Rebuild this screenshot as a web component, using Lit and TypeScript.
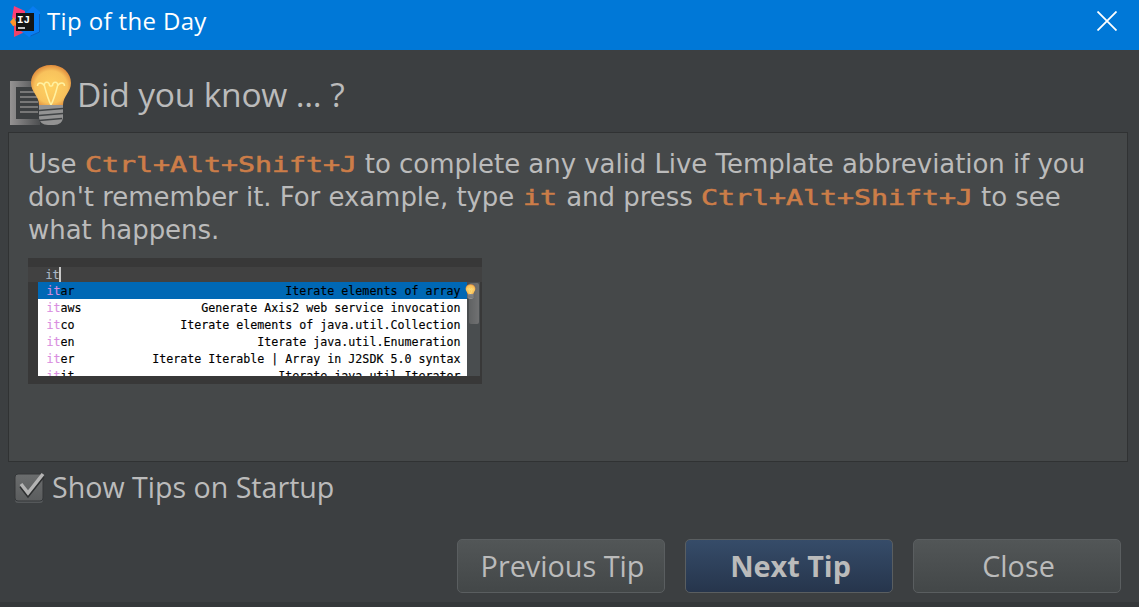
import { LitElement, html, css, svg } from "lit";
import { customElement, state } from "lit/decorators.js";

const bulb = svg`
  <path d="M20 1C8 1 0 9 0 19c0 9 8 13 8 22h24c0-9 8-13 8-22C40 9 32 1 20 1Z" fill="url(#glow)"/>
  <path d="M6.500 22c0-4 5-4 7 0 1 4 3 12 6.500 19 3.500-7 5.500-15 6.500-19 2-4 7-4 7 0M13.500 22c-1-5 5-5 5 0M26.500 22c1-5-5-5-5 0M18.500 22h3" fill="none" stroke="#fff1a0" stroke-width="1.500"/>
  <path d="M8 41h24v13q-1 7-9 7h-6q-8 0-9-7Z" fill="#939393"/>
  <path d="M8 46.500l24-2M8 51.500l24-2M8 56.500l23-2" stroke="#414446" stroke-width="1.300"/>`;

const glow = svg`<radialGradient id="glow" cx=".5" cy=".55" r=".58">
  <stop offset="0" stop-color="#ffd262"/><stop offset=".7" stop-color="#f8c25c"/>
  <stop offset="1" stop-color="#da8137"/></radialGradient>`;

@customElement("completion-preview")
class CompletionPreview extends LitElement {
  static styles = css`
    :host { display: block; box-sizing: border-box; width: 454px; height: 126px; padding: 9px 0 0;
      background: #383838; font: 11.650px/17px "DejaVu Sans Mono", monospace; color: #000; }
    .input { height: 15px; background: #414141; padding-left: 17.500px; color: #a9b7c6; display: flex; white-space: pre; -webkit-text-stroke: .2px; }
    .caret { width: 2px; height: 15px; background: #c8c8c8; margin-left: -.6px; }
    .body { display: flex; margin-left: 10px; height: 94px; width: 442px; overflow: hidden; }
    .list { width: 429px; background: #fff; }
    .row { display: flex; justify-content: space-between; height: 17px; line-height: 19px; padding: 0 6.500px 0 8.500px; -webkit-text-stroke: .15px; }
    .selected { background: #0068b5; }
    .prefix { color: #d98ee0; }
    .track { width: 13px; background: #494d4f; position: relative; }
    .thumb { width: 10px; height: 41px; margin: 1px 0 0 2px; border-radius: 2px; background: linear-gradient(90deg,#606263,#707172); }
    .bulb { position: absolute; left: -2px; top: 2px; }
  `;
  private rows = [
    ["ar", "Iterate elements of array"],
    ["aws", "Generate Axis2 web service invocation"],
    ["co", "Iterate elements of java.util.Collection"],
    ["en", "Iterate java.util.Enumeration"],
    ["er", "Iterate Iterable | Array in J2SDK 5.0 syntax"],
    ["it", "Iterate java.util.Iterator"],
  ];
  render() {
    return html`<div class="input"><span>it</span><i class="caret"></i></div>
      <div class="body"><div class="list">
        ${this.rows.map(([end, info], i) => html`<div class="row ${i ? "" : "selected"}">
          <span><span class="prefix">it</span>${end}</span><span>${info}</span></div>`)}
      </div><div class="track"><div class="thumb"></div>
        <svg class="bulb" width="11" height="15" viewBox="0 0 40 61"><defs>${glow}</defs>${bulb}</svg>
      </div></div>`;
  }
}

@customElement("app-root")
class AppRoot extends LitElement {
  static styles = css`
    :host { display: flex; flex-direction: column; box-sizing: border-box; width: 1139px; height: 607px;
      background: #3c3f41; color: #bbb; font-family: "Open Sans", sans-serif; overflow: hidden; }
    .titlebar { height: 50px; flex: none; box-sizing: border-box; background: #0078d7; color: #fff; display: flex; align-items: center;
      padding: 0 22px 8px 10px; font-size: 24px; }
    .title { margin: 0 0 1px 7px; flex: 1; letter-spacing: .36px; }
    .heading { height: 82px; flex: none; display: flex; padding: 0 10px; }
    .tip-icon { margin-top: 14px; }
    h1 { margin: 19px 0 0 5px; font-size: 33.600px; line-height: 50px; font-weight: 400; white-space: pre; letter-spacing: -.33px; word-spacing: .5px; }
    .panel { flex: none; box-sizing: border-box; height: 330px; margin: 0 11px 0 8px; padding: 15px 19px; background: #454849; border: 1px solid #303233; }
    .copy { font: 26px/33px "DejaVu Sans", sans-serif; height: 110px; letter-spacing: -.05px; }
    .line { display: flex; white-space: pre; height: 33px; }
    .key { display: block; color: #cc7d48; height: 33px; }
    .glyphs { display: block; width: max-content; font: 22px/33px "DejaVu Sans Mono", monospace; letter-spacing: 0; -webkit-text-stroke: .6px #cc7d48; transform: scaleX(1.283); transform-origin: 0 0; }
    .combo { width: 272px; }
    .short { width: 35.500px; }
    .check { display: flex; align-items: center; height: 52px; padding: 0 0 2px 14px; font-size: 28.600px; flex: none; }
    .check-label { margin: 0 0 3px 7px; }
    .buttons { display: flex; gap: 20px; margin: 23px 18px 0 0; justify-content: flex-end; flex: none; }
    button { width: 208px; height: 54px; box-sizing: border-box; padding: 0 0 2px 3px; font: 28.800px "Open Sans", sans-serif; color: #bbb;
      border: 1px solid #5a5e60; border-radius: 5px; background: linear-gradient(#525657,#434748); }
    .primary { font-weight: 700; background: linear-gradient(#364c69,#26354c); }
    .edge { height: 5px; margin-top: auto; background: #35383a; }
    .monogram { font: 700 11px "Liberation Mono", monospace; fill: #fff; }
  `;
  @state() private startup = true;
  private key(text: string, cls: string) {
    return html`<span class="key ${cls}"><span class="glyphs">${text}</span></span>`;
  }
  render() {
    return html`
      <header class="titlebar">
        <svg width="30" height="32" viewBox="0 0 30 32">
          <path d="M4 1 15 6v12l-13-5Z" fill="#fc3d76"/><path d="M0 17l4-5 4 10-5-1Z" fill="#ff9429"/>
          <path d="M4 20l13 6-13 6Z" fill="#ef4268"/><path d="M16 8 23 1l7 6v20l-11 5-8-6Z" fill="#087cf2"/>
          <path d="M29.500 9v18l-9 4" fill="none" stroke="#0b5fb7"/>
          <rect x="6" y="8" width="18" height="18" fill="#151515"/>
          <text class="monogram" x="7" y="17.500" textLength="13">IJ</text><path d="M8 23h7" stroke="#fff" stroke-width="1.500"/>
        </svg>
        <span class="title">Tip of the Day</span>
        <svg width="20" height="20" viewBox="0 0 20 20"><path d="M.5.5l19 19M19.500.5l-19 19" stroke="#fff" stroke-width="1.800"/></svg>
      </header>
      <div class="heading">
        <svg class="tip-icon" width="62" height="62" viewBox="0 0 62 62">
          <defs>${glow}<linearGradient id="page"><stop stop-color="#959393"/><stop offset="1" stop-color="#4c4e50"/></linearGradient></defs>
          <path d="M0 17h30v44H0Z" fill="url(#page)"/><path d="M6 23h24v32H6Z" fill="#3c3f41"/>
          <path d="M10 28h18M10 33h18M10 38h18M10 43h18M10 48h18" stroke="#777" stroke-width="2"/>
          <g transform="translate(21 0)">${bulb}</g>
        </svg>
        <h1>Did you know ... ?</h1>
      </div>
      <section class="panel">
        <div class="copy">
          <div class="line">Use ${this.key("Ctrl+Alt+Shift+J", "combo")} to complete any valid Live Template abbreviation if you</div>
          <div class="line">don't remember it. For example, type ${this.key("it", "short")} and press ${this.key("Ctrl+Alt+Shift+J", "combo")} to see</div>
          <div class="line">what happens.</div>
        </div>
        <completion-preview></completion-preview>
      </section>
      <label class="check" @click=${() => (this.startup = !this.startup)}>
        <svg width="31" height="32" viewBox="0 0 31 32">
          <defs><linearGradient id="box" x2="0" y2="1"><stop stop-color="#6b6d6e"/><stop offset="1" stop-color="#5b5d5e"/></linearGradient></defs>
          <rect x="1" y="3" width="28" height="28" rx="3" fill="#55585a"/><rect x="1" y="2" width="28" height="27" rx="3" fill="url(#box)" stroke="#343739"/>
          ${this.startup ? svg`<path d="M7 14l7 9L29 4" fill="none" stroke="#2d2f30" stroke-width="4"/><path d="M7 12l7 9L29 2" fill="none" stroke="#b4b4b4" stroke-width="3.500"/>` : ""}
        </svg>
        <span class="check-label">Show Tips on Startup</span>
      </label>
      <div class="buttons"><button>Previous Tip</button><button class="primary">Next Tip</button><button>Close</button></div>
      <div class="edge"></div>`;
  }
}
